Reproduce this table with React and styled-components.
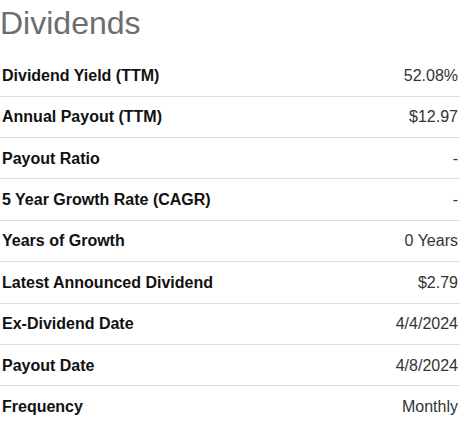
import React from "react";
import styled, { createGlobalStyle } from "styled-components";

const rows = [
  ["Dividend Yield (TTM)", "52.08%"],
  ["Annual Payout (TTM)", "$12.97"],
  ["Payout Ratio", "-"],
  ["5 Year Growth Rate (CAGR)", "-"],
  ["Years of Growth", "0 Years"],
  ["Latest Announced Dividend", "$2.79"],
  ["Ex-Dividend Date", "4/4/2024"],
  ["Payout Date", "4/8/2024"],
  ["Frequency", "Monthly"],
];

const App = () => (
  <>
    <GlobalStyle />
    <Panel>
      <Title>Dividends</Title>
      <List>
        {rows.map(([label, value]) => (
          <Row key={label}>
            <Label>{label}</Label>
            <Value>{value}</Value>
          </Row>
        ))}
      </List>
    </Panel>
  </>
);

export default App;

// CSS

const GlobalStyle = createGlobalStyle`
  body {
    margin: 0;
    background: #fff;
    font-family: "Liberation Sans", Arial, sans-serif;
  }
`;

const Panel = styled.div`
  width: 460px;
`;

const Title = styled.h2`
  margin: 0;
  padding: 5px 0 13.5px;
  font-size: 32px;
  line-height: 36.8px;
  font-weight: 400;
  color: #6d6d6d;
`;

const List = styled.div`
  display: flex;
  flex-direction: column;
`;

const Row = styled.div`
  display: flex;
  justify-content: space-between;
  align-items: center;
  padding: 10.6px 2px 9.4px;
  line-height: 20.4px;
  font-size: 16px;
  border-bottom: 1px solid #dcdcdc;

  &:last-child {
    border-bottom: none;
  }
`;

const Label = styled.span`
  font-weight: 700;
  color: #111;
`;

const Value = styled.span`
  color: #333;
`;
